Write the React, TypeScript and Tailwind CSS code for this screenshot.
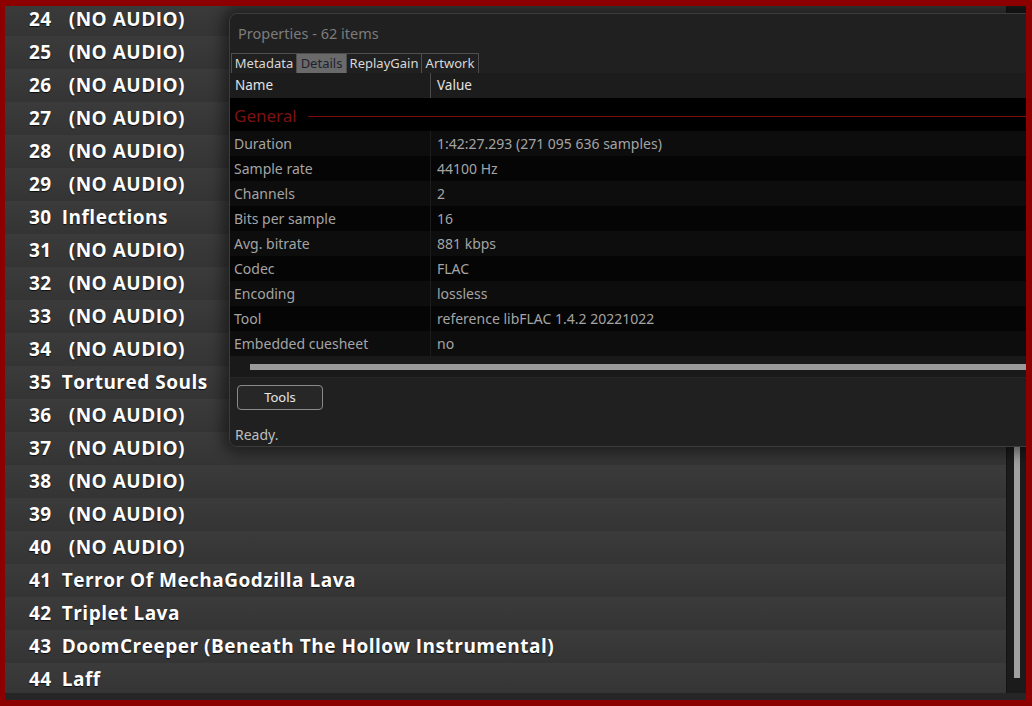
import React from 'react';

const NO_AUDIO = '(NO AUDIO)';

const tracks: [number, string][] = [
  [24, NO_AUDIO],
  [25, NO_AUDIO],
  [26, NO_AUDIO],
  [27, NO_AUDIO],
  [28, NO_AUDIO],
  [29, NO_AUDIO],
  [30, 'Inflections'],
  [31, NO_AUDIO],
  [32, NO_AUDIO],
  [33, NO_AUDIO],
  [34, NO_AUDIO],
  [35, 'Tortured Souls'],
  [36, NO_AUDIO],
  [37, NO_AUDIO],
  [38, NO_AUDIO],
  [39, NO_AUDIO],
  [40, NO_AUDIO],
  [41, 'Terror Of MechaGodzilla Lava'],
  [42, 'Triplet Lava'],
  [43, 'DoomCreeper (Beneath The Hollow Instrumental)'],
  [44, 'Laff'],
];

const details: [string, string][] = [
  ['Duration', '1:42:27.293 (271 095 636 samples)'],
  ['Sample rate', '44100 Hz'],
  ['Channels', '2'],
  ['Bits per sample', '16'],
  ['Avg. bitrate', '881 kbps'],
  ['Codec', 'FLAC'],
  ['Encoding', 'lossless'],
  ['Tool', 'reference libFLAC 1.4.2 20221022'],
  ['Embedded cuesheet', 'no'],
];

const tabs = [
  { label: 'Metadata', w: 'w-[66px]' },
  { label: 'Details', w: 'w-[51px]', active: true },
  { label: 'ReplayGain', w: 'w-[76px]' },
  { label: 'Artwork', w: 'w-[58px]' },
];

function TrackRow({ num, title }: { num: number; title: string }) {
  const noAudio = title === NO_AUDIO;
  return (
    <div className="h-[33px] shrink-0 flex items-center pl-[24px] bg-gradient-to-b from-[#3b3b3b] to-[#343434] text-white font-bold text-[19px] tracking-[0.5px] whitespace-nowrap [text-shadow:0_1px_1px_rgba(0,0,0,0.75)]">
      <span>{num}</span>
      <span className={noAudio ? 'ml-[17px]' : 'ml-[10px]'}>{title}</span>
    </div>
  );
}

function PropertiesDialog() {
  return (
    <div className="absolute left-[224px] top-[7px] w-[820px] h-[434px] flex flex-col bg-[#202020] border border-[#3c3c3c] rounded-l-[8px] shadow-[0_0_14px_6px_rgba(0,0,0,0.45)] font-['Noto_Sans',sans-serif] overflow-hidden">
      <div className="h-[39px] shrink-0 flex items-center pl-[8px] text-[14.5px] text-[#7c7c7c]">
        Properties - 62 items
      </div>
      <div className="h-[20px] shrink-0 flex pl-[1px]">
        {tabs.map(t => (
          <div
            key={t.label}
            className={`${t.w} h-full flex items-center justify-center border-t border-l border-r border-[#4e4e4e] -ml-px first:ml-0 text-[13px] ${t.active ? 'bg-[#6a6a6a] text-[#1e2230]' : 'text-[#d8d8d8]'}`}
          >
            {t.label}
          </div>
        ))}
      </div>
      <div className="h-[25px] shrink-0 flex items-center bg-[#1c1c1c] text-[13.5px] text-[#e2e2e2]">
        <div className="w-[201px] h-full flex items-center pl-[5px] border-r border-[#4a4a4a]">Name</div>
        <div className="pl-[6px]">Value</div>
      </div>
      <div className="h-[258px] shrink-0 flex flex-col bg-black">
        <div className="h-[33px] shrink-0 flex items-center pl-[4px] gap-[11px] pt-[2px]">
          <span className="text-[17px] text-[#7a1212] leading-none">General</span>
          <div className="flex-1 h-px bg-[#7c0c0c] mt-[1px]" />
        </div>
        {details.map(([name, value], i) => (
          <div
            key={name}
            className={`h-[25px] shrink-0 flex items-center text-[14px] text-[#a4a4a4] ${i % 2 === 0 ? 'bg-[#0d0d0d]' : 'bg-[#050505]'}`}
          >
            <div className="w-[201px] h-full flex items-center pl-[4px] border-r border-[#1c1c1c]">{name}</div>
            <div className="pl-[6px]">{value}</div>
          </div>
        ))}
      </div>
      <div className="h-[21px] shrink-0 flex items-center bg-[#191919] pl-[20px]">
        <div className="flex-1 h-[6px] bg-[#9a9a9a]" />
      </div>
      <div className="flex-1 flex flex-col bg-[#202020] border-t border-[#262626] pl-[7px]">
        <button className="mt-[7px] w-[86px] h-[25px] rounded-[4px] border border-[#8a8a8a] bg-[#272727] text-[13px] text-[#e8e8e8]">
          Tools
        </button>
        <div className="mt-[14px] -ml-[2px] text-[14px] text-[#bebebe]">Ready.</div>
      </div>
    </div>
  );
}

export default function App() {
  return (
    <div className="w-[1032px] h-[706px] bg-[#8c0000] pt-[6px] pl-[5px] pr-[6px] pb-[6px] font-['Open_Sans',sans-serif]">
      <div className="relative w-full h-full flex flex-col overflow-hidden bg-[#2a2a2a]">
        <div className="flex-1 flex min-h-0">
          <div className="flex-1 flex flex-col overflow-hidden">
            <div className="-mt-[3px] flex flex-col">
              {tracks.map(([n, t]) => (
                <TrackRow key={n} num={n} title={t} />
              ))}
            </div>
          </div>
          <div className="w-[20px] shrink-0 bg-[#1b1b1b] border-l border-[#141414] flex flex-col items-center pt-[290px] pb-[15px]">
            <div className="w-[6px] flex-1 bg-[#a0a0a0] ml-[1px]" />
          </div>
        </div>
        <div className="h-[7px] shrink-0 bg-[#262626]" />
        <PropertiesDialog />
      </div>
    </div>
  );
}
